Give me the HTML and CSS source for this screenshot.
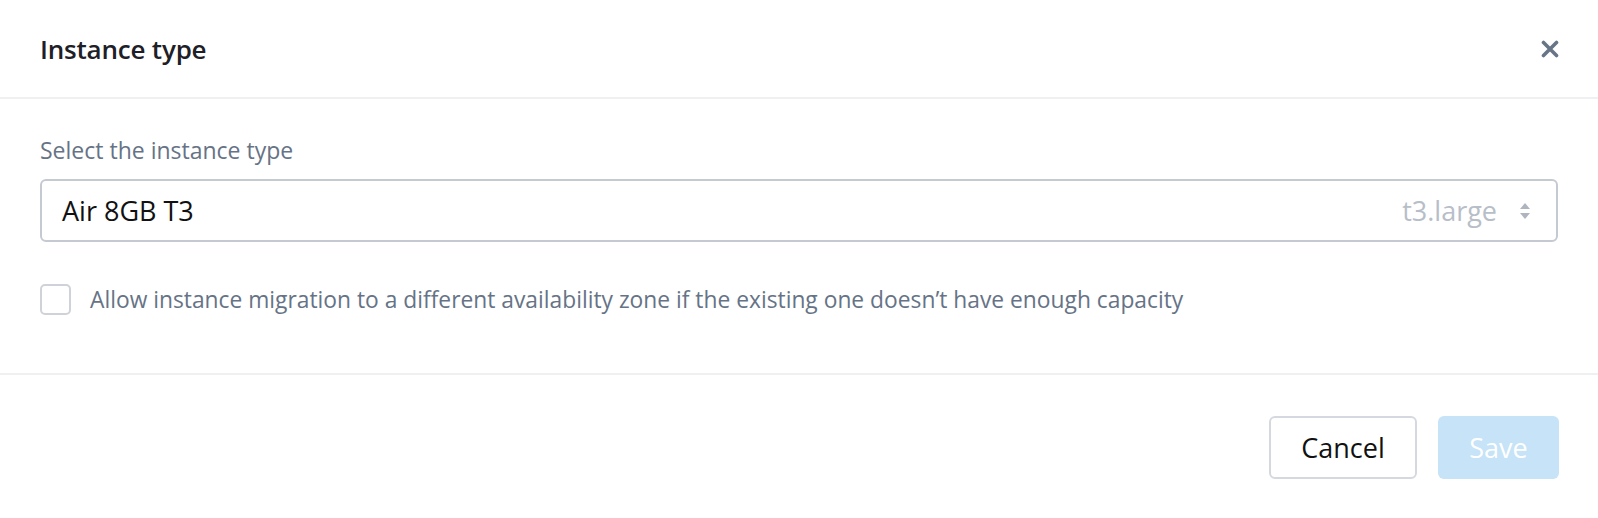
FILE: index.html
```html
<!DOCTYPE html>
<html lang="en">
<head>
    <meta charset="UTF-8">
    <meta name="viewport" content="width=device-width, initial-scale=1.0">
    <title>Instance type</title>
    <link rel="stylesheet" href="styles.css">
</head>
<body>
    <div class="modal">
        <header class="modal-header">
            <h2 class="modal-title">Instance type</h2>
            <button class="close-btn" aria-label="Close">
                <svg width="18" height="18" viewBox="0 0 18 18" fill="none" stroke="currentColor" stroke-width="3.6" stroke-linecap="round">
                    <path d="M2.5 2.5l13 13M15.5 2.5l-13 13"/>
                </svg>
            </button>
        </header>

        <div class="modal-body">
            <label class="field-label">Select the instance type</label>
            <div class="select">
                <span class="select-value">Air 8GB T3</span>
                <span class="select-meta">t3.large</span>
                <svg class="select-arrows" width="12" height="20" viewBox="0 0 12 20" fill="currentColor">
                    <path d="M6 2l5 6h-10z"/>
                    <path d="M6 18l5-6h-10z"/>
                </svg>
            </div>

            <label class="check-row">
                <span class="checkbox"></span>
                <span class="check-text">Allow instance migration to a different availability zone if the existing one doesn’t have enough capacity</span>
            </label>
        </div>

        <footer class="modal-footer">
            <button class="btn btn-cancel">Cancel</button>
            <button class="btn btn-save" disabled>Save</button>
        </footer>
    </div>
</body>
</html>
```

FILE: styles.css
```css
:root {
    --text-color: #1d2026;
    --muted-text: #667386;
    --border-color: #c5cad2;
    --divider-color: #eff0f2;
    --placeholder: #b7bec8;
    --primary-light: #c6e3f8;
}

* {
    margin: 0;
    padding: 0;
    box-sizing: border-box;
    font-family: 'Open Sans', 'Lato', sans-serif;
}

body {
    background-color: #ffffff;
    color: var(--text-color);
}

.modal {
    width: 100%;
    background-color: white;
}

.modal-header {
    height: 99px;
    display: flex;
    justify-content: space-between;
    align-items: center;
    padding: 0 39px 0 40px;
    border-bottom: 2px solid var(--divider-color);
}

.modal-title {
    font-size: 26px;
    font-weight: 600;
    letter-spacing: -0.2px;
    line-height: 32px;
    color: var(--text-color);
}

.close-btn {
    background: none;
    border: none;
    color: #687587;
    display: flex;
    cursor: pointer;
}

.modal-body {
    padding: 39px 40px 58px 40px;
}

.field-label {
    display: block;
    font-size: 23px;
    line-height: 24px;
    color: var(--muted-text);
    margin-bottom: 17px;
}

.select {
    height: 63px;
    display: flex;
    align-items: center;
    border: 2px solid var(--border-color);
    border-radius: 6px;
    padding: 0 25px 0 20px;
}

.select-value {
    flex: 1;
    font-size: 27px;
    color: #111;
}

.select-meta {
    font-size: 27px;
    color: var(--placeholder);
    margin-right: 22px;
}

.select-arrows {
    color: #aeb5be;
}

.check-row {
    display: flex;
    align-items: center;
    gap: 19px;
    margin-top: 42px;
}

.checkbox {
    width: 31px;
    height: 31px;
    border: 2px solid #cfd3d9;
    border-radius: 5px;
    flex-shrink: 0;
}

.check-text {
    font-size: 22.8px;
    line-height: 31px;
    color: var(--muted-text);
}

.modal-footer {
    display: flex;
    justify-content: flex-end;
    gap: 21px;
    padding: 41px 39px 40px 40px;
    border-top: 2px solid var(--divider-color);
}

.btn {
    height: 63px;
    border-radius: 6px;
    font-size: 27px;
}

.btn-cancel {
    width: 148px;
    background-color: white;
    border: 2px solid #d5d9df;
    color: #111;
}

.btn-save {
    width: 121px;
    background-color: var(--primary-light);
    border: none;
    color: white;
}
```
